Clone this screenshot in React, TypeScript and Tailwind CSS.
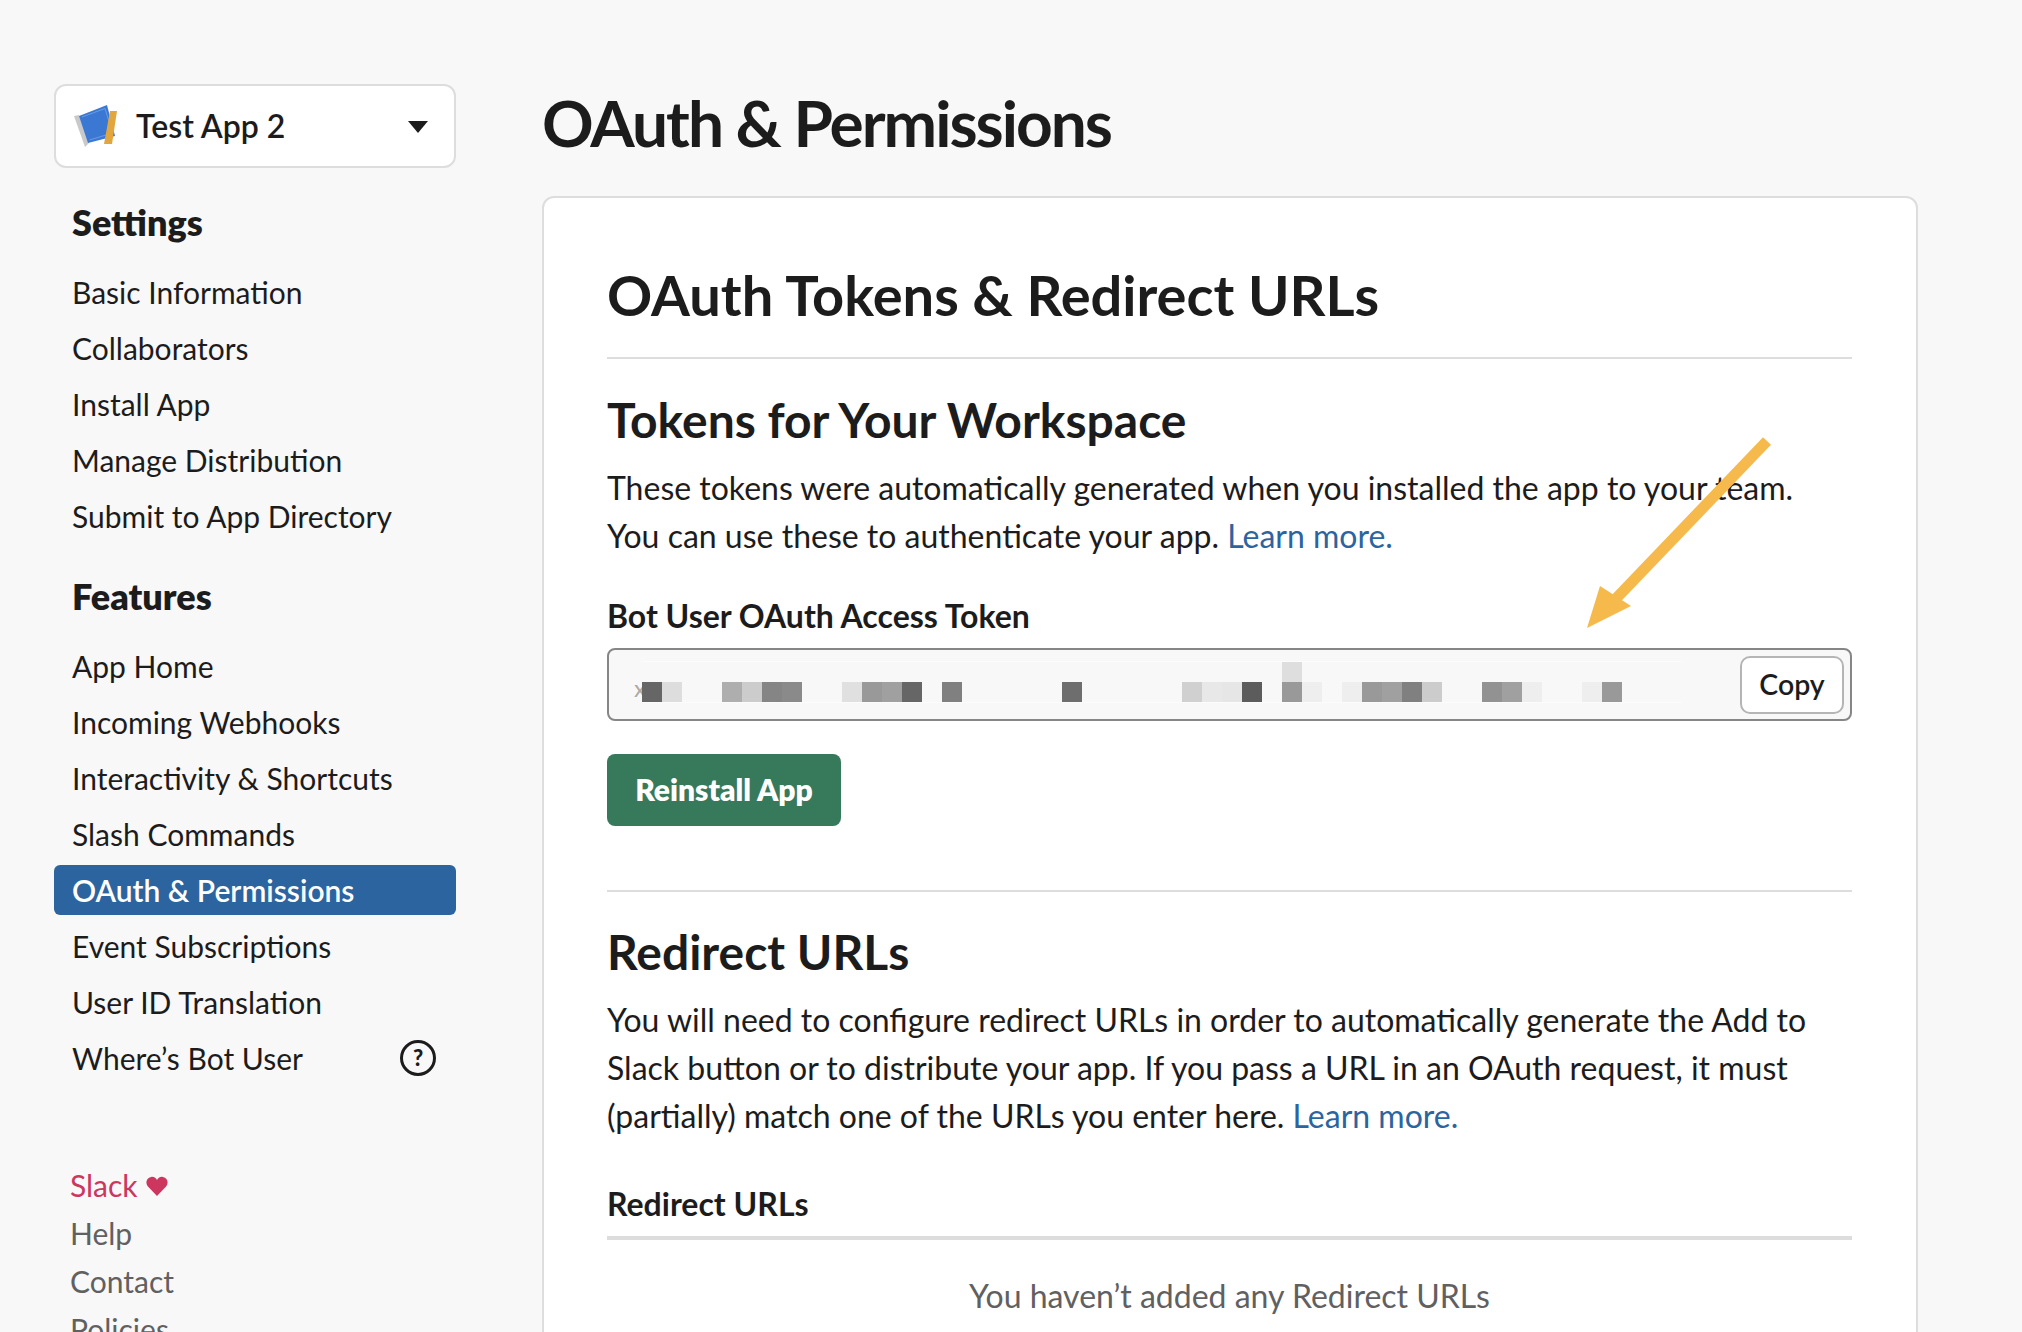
const settings = ["Basic Information", "Collaborators", "Install App", "Manage Distribution", "Submit to App Directory"];
const features = ["App Home", "Incoming Webhooks", "Interactivity & Shortcuts", "Slash Commands", "OAuth & Permissions", "Event Subscriptions", "User ID Translation", "Where’s Bot User"];

// pixelated token, one entry per 20px cell
const tokenCells = [
  "bg-[#666666]", "bg-[#dddddd]", "", "", "bg-[#aeaeae]", "bg-[#cccccc]", "bg-[#858585]", "bg-[#8a8a8a]", "", "", "bg-[#e0e0e0]", "bg-[#999999]",
  "bg-[#a0a0a0]", "bg-[#666666]", "", "bg-[#808080]", "", "", "", "", "", "bg-[#6e6e6e]", "", "", "", "", "", "bg-[#d0d0d0]",
  "bg-[#e8e8e8]", "bg-[#e6e6e6]", "bg-[#5c5c5c]", "", "bg-[#999999]", "bg-[#eeeeee]", "", "bg-[#eeeeee]", "bg-[#999999]", "bg-[#a0a0a0]", "bg-[#808080]", "bg-[#cccccc]",
  "", "", "bg-[#929292]", "bg-[#a0a0a0]", "bg-[#eeeeee]", "", "", "bg-[#eeeeee]", "bg-[#999999]",
];

function NavItem({ label, active }: { label: string; active?: boolean }) {
  return (
    <div className={`flex h-[50px] items-center justify-between rounded-md px-[18px] mb-[6px] text-[30px] ${active ? "bg-[#2c649f] text-white font-semibold" : "text-[#1d1c1d]"}`}>
      <span>{label}</span>
      {label === "Where’s Bot User" && (
        <span className="mr-[2px] flex h-9 w-9 items-center justify-center rounded-full border-[3px] border-[#1d1c1d] text-[22px] font-black leading-none">?</span>
      )}
    </div>
  );
}

function BookIcon() {
  return (
    <svg width="44" height="42" viewBox="0 0 44 42">
      <path d="M0 11 L5 10 L15 38 L11 42 Z" fill="#c9c9c9" />
      <path d="M5 11 L33 0 L41 31 L14 38 Z" fill="#3b78d4" />
      <path d="M8 12 L31 3.5 L38.5 28 L15.5 35" fill="none" stroke="#7fa9e6" strokeWidth="0.7" />
      <path d="M36 6 L43 6 L38 39 L30 39 Z" fill="#e2a63e" />
    </svg>
  );
}

export default function App() {
  return (
    <div className="relative h-[1332px] w-full overflow-hidden bg-[#f8f8f8] font-['Lato',sans-serif] text-[#1d1c1d]">
      <div className="flex items-start pl-[54px] pt-[84px]">
        <aside className="w-[402px] shrink-0">
          <div className="flex h-[84px] items-center rounded-xl border-2 border-[#dddddd] bg-white pl-[18px] pr-[26px]">
            <BookIcon />
            <span className="ml-[18px] text-[32px] font-semibold">Test App 2</span>
            <span className="ml-auto mt-[2px] h-0 w-0 border-x-[10px] border-t-[12px] border-x-transparent border-t-[#1d1c1d]" />
          </div>

          <h3 className="mt-[31px] mb-[22px] px-[18px] text-[36px] font-extrabold leading-[46px]">Settings</h3>
          {settings.map((s) => (
            <NavItem key={s} label={s} />
          ))}

          <h3 className="mt-[32px] mb-[22px] px-[18px] text-[36px] font-extrabold leading-[46px]">Features</h3>
          {features.map((s) => (
            <NavItem key={s} label={s} active={s === "OAuth & Permissions"} />
          ))}

          <div className="mt-[78px] px-[16px] text-[30px] leading-[48px] text-[#616061]">
            <div className="flex items-center text-[#cc3760]">
              Slack
              <svg className="ml-[8px] mt-[2px]" width="22" height="20" viewBox="0 0 24 22" fill="#cc3760">
                <path d="M12 22 L2 11.5 C-1 8 0 2 5.5 1 C8.5 .5 11 2 12 4.5 C13 2 15.5 .5 18.5 1 C24 2 25 8 22 11.5 Z" />
              </svg>
            </div>
            <div>Help</div>
            <div>Contact</div>
            <div>Policies</div>
          </div>
        </aside>

        <main className="ml-[86px] w-[1376px] shrink-0">
          <h1 className="mb-[32px] mt-[-2px] text-[64px] font-bold leading-[82px] tracking-[-2px]">OAuth &amp; Permissions</h1>
          <section className="rounded-xl border-2 border-[#dddddd] bg-white pb-[200px] pl-[63px] pr-[64px] pt-[63px]">
            <h2 className="border-b-2 border-[#dddddd] pb-[28px] text-[56px] font-bold leading-[68px]">OAuth Tokens &amp; Redirect URLs</h2>

            <h3 className="mt-[33px] text-[48px] font-bold leading-[56px]">Tokens for Your Workspace</h3>
            <p className="mt-[16px] text-[32px] leading-[48px]">
              These tokens were automatically generated when you installed the app to your team.
              <br />
              You can use these to authenticate your app. <a className="text-[#2c649f]">Learn more.</a>
            </p>

            <div className="mt-[32px] text-[32px] font-bold leading-[48px]">Bot User OAuth Access Token</div>
            <div className="mt-[8px] flex h-[73px] items-center rounded-lg border-2 border-[#868686] bg-[#f8f8f8] pl-[25px] pr-[6px]">
              <span className="mr-[-4px] mt-[6px] text-[24px] text-[#aaaaaa]">x</span>
              <div className="mb-[5px] flex w-[1040px] flex-col border-y border-[#fcfcfc]">
                <div className="flex h-[20px]">
                  <div className="ml-[640px] w-[20px] bg-[#dedede]" />
                </div>
                <div className="flex h-[20px]">
                  {tokenCells.map((c, i) => (
                    <div key={i} className={`w-[20px] shrink-0 ${c}`} />
                  ))}
                </div>
              </div>
              <button className="ml-auto h-[58px] w-[104px] rounded-[10px] border-2 border-[#b5b5b5] bg-white text-[28.5px] font-semibold">Copy</button>
            </div>

            <button className="mt-[33px] h-[72px] w-[234px] rounded-lg bg-[#37795b] pb-[2px] text-[30px] font-extrabold text-white">Reinstall App</button>

            <div className="mt-[64px] h-[2px] bg-[#dddddd]" />

            <h3 className="mt-[32px] text-[48px] font-bold leading-[56px]">Redirect URLs</h3>
            <p className="mt-[16px] text-[32px] leading-[48px]">
              You will need to configure redirect URLs in order to automatically generate the Add to
              <br />
              Slack button or to distribute your app. If you pass a URL in an OAuth request, it must
              <br />
              (partially) match one of the URLs you enter here. <a className="text-[#2c649f]">Learn more.</a>
            </p>

            <div className="mt-[40px] border-b-4 border-[#dddddd] pb-[8px] text-[32px] font-bold leading-[48px]">Redirect URLs</div>
            <div className="mt-[32px] text-center text-[32px] leading-[48px] text-[#616061]">You haven’t added any Redirect URLs</div>
          </section>
        </main>
      </div>

      {/* annotation arrow drawn over the card */}
      <svg className="absolute left-[1570px] top-[425px]" width="210" height="215" viewBox="0 0 210 215" fill="none">
        <path d="M197 16 L36 184" stroke="#f5b94c" strokeWidth="11" />
        <path d="M17 203 L30 161 L61 181 Z" fill="#f5b94c" />
      </svg>
    </div>
  );
}
